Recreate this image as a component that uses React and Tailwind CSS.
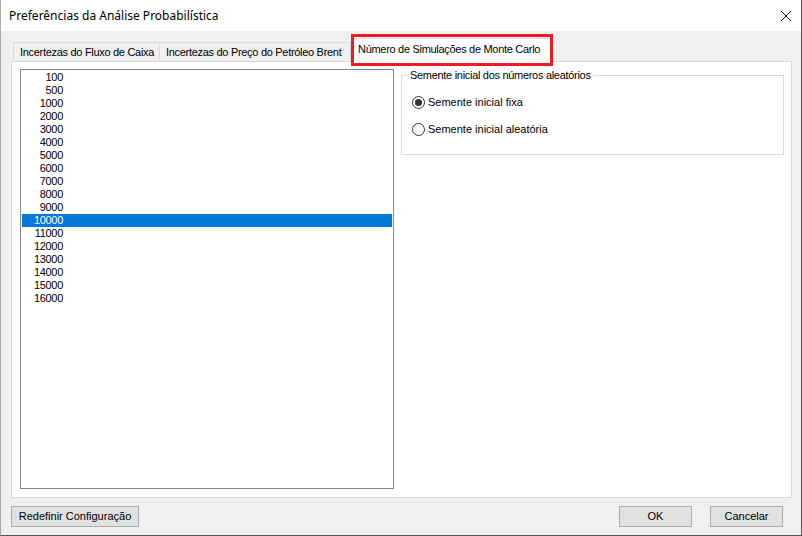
import React from "react";

const items = ["100","500","1000","2000","3000","4000","5000","6000","7000","8000","9000","10000","11000","12000","13000","14000","15000","16000"];

function Radio({ checked, label }) {
  return (
    <div className="flex items-center h-[16px]">
      <div className="w-[13px] h-[13px] rounded-full border border-[#333333] bg-white flex items-center justify-center">
        {checked && <div className="w-[7px] h-[7px] rounded-full bg-[#333333]" />}
      </div>
      <span className="ml-[3px] tracking-normal">{label}</span>
    </div>
  );
}

export default function App() {
  return (
    <div
      className="relative w-[802px] h-[536px] bg-[#f0f0f0] border-l border-r border-b border-l-[#aaaaaa] border-r-[#555555] border-b-[#555555] text-[11px] tracking-[-0.3px] text-black overflow-hidden"
      style={{ fontFamily: '"Liberation Sans", Arial, sans-serif' }}
    >
      {/* Title bar */}
      <div className="h-[31px] bg-white flex items-center justify-between pl-[8px] pr-[9px]">
        <span className="text-[12px] tracking-normal text-black" style={{ fontFamily: '"Noto Sans", "Open Sans", sans-serif' }}>
          Preferências da Análise Probabilística
        </span>
        <svg width="12" height="12" viewBox="0 0 12 12">
          <path d="M1 1 L11 11 M11 1 L1 11" stroke="#111" strokeWidth="1" fill="none" />
        </svg>
      </div>

      {/* Tabs */}
      <div className="ml-[11px] mt-[6px] flex items-end h-[24px] relative z-10 whitespace-nowrap">
        <div className="ml-[1px] w-[147px] h-[19px] pl-[6px] flex items-center border border-b-0 border-[#d9d9d9] bg-[#f0f0f0]">
          Incertezas do Fluxo de Caixa
        </div>
        <div className="w-[191px] h-[19px] pl-[6px] flex items-center border border-l-0 border-b-0 border-[#d9d9d9] bg-[#f0f0f0]">
          Incertezas do Preço do Petróleo Brent
        </div>
        <div className="w-[200px] h-[24px] pl-[7px] flex items-center border border-l-0 border-b-0 border-[#d9d9d9] bg-white mb-[-1px] pb-[3px]">
          Número de Simulações de Monte Carlo
        </div>
      </div>

      {/* Red highlight */}
      <div className="absolute left-[350px] top-[34px] w-[202px] h-[32px] border-[3px] border-[#ed1c24] z-20 pointer-events-none" />

      {/* Panel */}
      <div className="ml-[10px] w-[781px] h-[437px] bg-white border border-[#d9d9d9] flex pl-[8px] pt-[7px]">
        {/* Listbox */}
        <div className="w-[374px] h-[420px] border border-[#828790] bg-white pt-[1px] px-[1px]">
          {items.map((it) => (
            <div
              key={it}
              className={
                "h-[13px] leading-[13px] " +
                (it === "10000" ? "bg-[#0078d7] text-white" : "")
              }
            >
              <span className="inline-block w-[41px] text-right">{it}</span>
            </div>
          ))}
        </div>

        {/* Groupbox */}
        <div className="ml-[7px] mt-[6px] relative w-[383px] h-[80px] border border-[#dcdcdc]">
          <span className="absolute left-[6px] top-[-8px] bg-white px-[2px] leading-[14px]">
            Semente inicial dos números aleatórios
          </span>
          <div className="pl-[10px] pt-[18px] flex flex-col gap-[11px]">
            <Radio checked label="Semente inicial fixa" />
            <Radio label="Semente inicial aleatória" />
          </div>
        </div>
      </div>

      {/* Buttons */}
      <div className="mt-[8px] ml-[10px] flex tracking-normal">
        <button className="w-[128px] h-[21px] bg-[#e1e1e1] border border-[#adadad] text-[11px] leading-[19px]">
          Redefinir Configuração
        </button>
        <button className="ml-[480px] w-[73px] h-[21px] bg-[#e1e1e1] border border-[#adadad] text-[11px] leading-[19px]">
          OK
        </button>
        <button className="ml-[18px] w-[73px] h-[21px] bg-[#e1e1e1] border border-[#adadad] text-[11px] leading-[19px]">
          Cancelar
        </button>
      </div>
    </div>
  );
}
